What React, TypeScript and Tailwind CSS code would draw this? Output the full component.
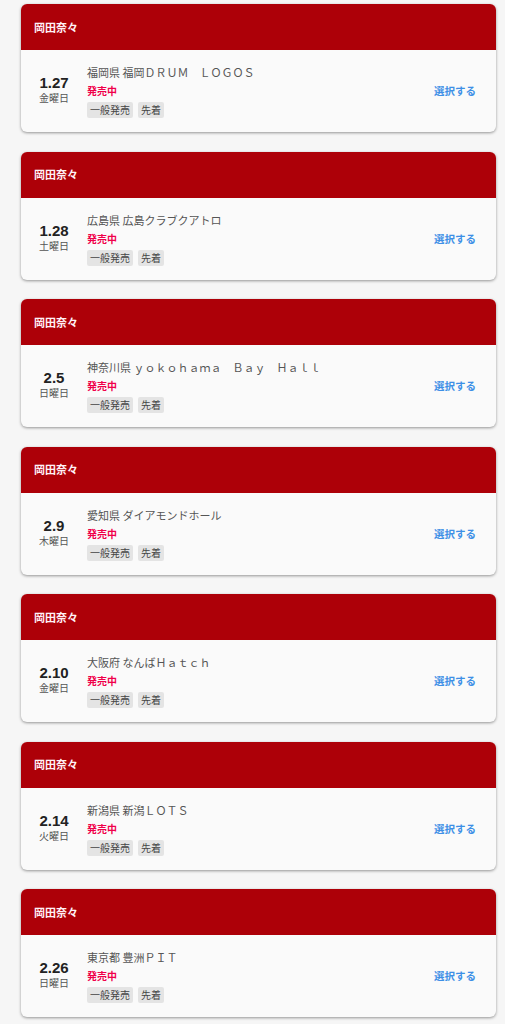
import React from 'react';

type Live = { date: string; week: string; pref: string; venue: string };

const LIVES: Live[] = [
  { date: '1.27', week: '金曜日', pref: '福岡県', venue: '福岡ＤＲＵＭ　ＬＯＧＯＳ' },
  { date: '1.28', week: '土曜日', pref: '広島県', venue: '広島クラブクアトロ' },
  { date: '2.5', week: '日曜日', pref: '神奈川県', venue: 'ｙｏｋｏｈａｍａ　Ｂａｙ　Ｈａｌｌ' },
  { date: '2.9', week: '木曜日', pref: '愛知県', venue: 'ダイアモンドホール' },
  { date: '2.10', week: '金曜日', pref: '大阪府', venue: 'なんばＨａｔｃｈ' },
  { date: '2.14', week: '火曜日', pref: '新潟県', venue: '新潟ＬＯＴＳ' },
  { date: '2.26', week: '日曜日', pref: '東京都', venue: '豊洲ＰＩＴ' },
];

const LiveCard: React.FC<{ live: Live }> = ({ live }) => (
  <div className="rounded-[6px] bg-[#fafafa] shadow-[0_1px_3px_rgba(0,0,0,0.4)] overflow-hidden">
    <div className="h-[46px] bg-[#ad0008] flex items-center pl-[13px]">
      <span className="text-[11px] font-bold text-[#fff0f6]">岡田奈々</span>
    </div>
    <div className="h-[82px] flex items-center pl-[8px] pr-[20px]">
      <div className="w-[50px] pb-[2px] flex flex-col items-center">
        <span className="text-[15px] leading-[16px] font-bold text-[#222] font-['Liberation_Sans',sans-serif]">{live.date}</span>
        <span className="text-[10px] leading-[14px] text-[#555]">{live.week}</span>
      </div>
      <div className="ml-[8px] flex-1 flex flex-col">
        <span className="text-[11px] leading-[16px] text-[#555] whitespace-nowrap">{live.pref} {live.venue}</span>
        <span className="mt-[3px] text-[10px] leading-[16px] font-bold text-[#f0004a]">発売中</span>
        <div className="mt-[3px] flex gap-[5px]">
          <span className="text-[10px] leading-[16px] px-[3px] bg-[#e4e4e4] text-[#444] rounded-[2px]">一般発売</span>
          <span className="text-[10px] leading-[16px] px-[3px] bg-[#e4e4e4] text-[#444] rounded-[2px]">先着</span>
        </div>
      </div>
      <span className="text-[10.5px] font-bold text-[#3d8fe6]">選択する</span>
    </div>
  </div>
);

export default function App() {
  return (
    <div className="min-h-[1024px] bg-[#f6f6f6] pt-[4px] pl-[21px] pr-[9px] font-['Noto_Sans_CJK_JP','Noto_Sans',sans-serif]">
      <div className="flex flex-col gap-[19.5px]">
        {LIVES.map(l => (
          <LiveCard key={l.date} live={l} />
        ))}
      </div>
    </div>
  );
}
